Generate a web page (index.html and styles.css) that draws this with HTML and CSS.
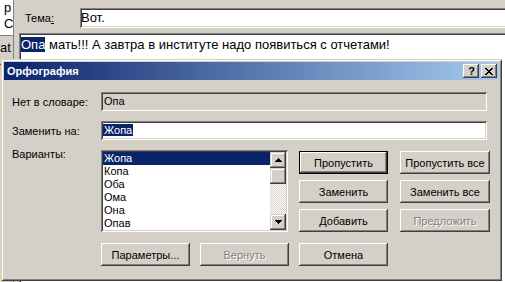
FILE: index.html
```html
<!DOCTYPE html>
<html lang="ru">
<head>
<meta charset="utf-8">
<title>Орфография</title>
<link rel="stylesheet" href="styles.css">
</head>
<body>
<div class="app">
  <div class="side">
    <div class="side-top"><div>р</div><div>С</div></div>
    <div class="side-bottom"><div class="side-line">at</div><div class="side-line">f</div><div class="side-rest"></div></div>
  </div>
  <div class="main">
    <div class="subject-row">
      <span class="subject-label">Тема<u>:</u></span>
      <div class="subject-input">Вот.</div>
    </div>
    <div class="body-text"><span class="hl">Опа</span> мать!!! А завтра в институте надо появиться с отчетами!</div>
  </div>
</div>

<div class="dialog">
  <div class="titlebar">
    <span class="title">Орфография</span>
    <div class="caption-btns">
      <span class="cap-btn help">?</span>
      <span class="cap-btn close"><svg width="8" height="7" viewBox="0 0 8 7" shape-rendering="crispEdges"><path d="M0 0h2v1H0zM6 0h2v1H6zM1 1h2v1H1zM5 1h2v1H5zM2 2h4v1H2zM3 3h2v1H3zM2 4h4v1H2zM1 5h2v1H1zM5 5h2v1H5zM0 6h2v1H0zM6 6h2v1H6z" fill="#000"/></svg></span>
    </div>
  </div>
  <div class="dlg-body">
    <div class="row">
      <span class="lbl">Нет в словаре:</span>
      <div class="field disabled">Опа</div>
    </div>
    <div class="row gap">
      <span class="lbl">Заменить на:</span>
      <div class="field"><span class="hl-sm">Жопа</span></div>
    </div>
    <div class="row gap top">
      <span class="lbl lbl-top">Варианты:</span>
      <div class="listbox">
        <ul class="items">
          <li class="sel">Жопа</li>
          <li>Копа</li>
          <li>Оба</li>
          <li>Ома</li>
          <li>Она</li>
          <li>Опав</li>
        </ul>
        <div class="scrollbar">
          <span class="sb-btn"><svg width="7" height="4" viewBox="0 0 7 4" shape-rendering="crispEdges"><path d="M3 0h1v1H3zM2 1h3v1H2zM1 2h5v1H1zM0 3h7v1H0z" fill="#000"/></svg></span>
          <span class="sb-thumb"></span>
          <span class="sb-track"></span>
          <span class="sb-btn"><svg width="7" height="4" viewBox="0 0 7 4" shape-rendering="crispEdges"><path d="M0 0h7v1H0zM1 1h5v1H1zM2 2h3v1H2zM3 3h1v1H3z" fill="#000"/></svg></span>
        </div>
      </div>
      <div class="btn-grid">
        <span class="btn default">Пропустить</span>
        <span class="btn">Пропустить все</span>
        <span class="btn">Заменить</span>
        <span class="btn">Заменить все</span>
        <span class="btn">Добавить</span>
        <span class="btn disabled-btn">Предложить</span>
      </div>
    </div>
    <div class="bottom-row">
      <span class="btn">Параметры...</span>
      <span class="btn disabled-btn">Вернуть</span>
      <span class="btn">Отмена</span>
    </div>
  </div>
</div>
</body>
</html>
```
FILE: styles.css
```css
* { box-sizing: border-box; }
html, body { margin: 0; padding: 0; }
body {
  width: 505px;
  height: 282px;
  overflow: hidden;
  position: relative;
  background: #D4D0C8;
  font-family: "Liberation Sans", Arial, sans-serif;
  font-size: 11px;
  color: #000;
}

/* background application */
.app { display: flex; height: 282px; }
.side {
  width: 14px;
  flex: none;
  display: flex;
  flex-direction: column;
  border-right: 1px solid #808080;
  overflow: hidden;
}
.side-top {
  height: 33px;
  background: #fff;
  font-size: 13px;
  line-height: 16px;
  padding: 0 0 0 4px;
  overflow: hidden;
}
.side-bottom {
  flex: 1;
  display: flex;
  flex-direction: column;
  border-top: 2px solid #fff;
  box-shadow: inset 0 1px #808080;
  font-size: 13px;
}
.side-line { height: 13px; line-height: 13px; padding-top: 6px; box-sizing: content-box; }
.side-rest { flex: 1; background: linear-gradient(to right, #E6D3A8 0 2px, #D4D0C8 2px); }

.main { flex: 1; display: flex; flex-direction: column; min-width: 0; }
.subject-row {
  height: 33px;
  display: flex;
  align-items: flex-start;
  padding-left: 11px;
}
.subject-label {
  width: 55px;
  flex: none;
  margin-top: 12px;
  font-size: 11px;
}
.subject-input {
  flex: 1;
  margin-top: 8px;
  margin-right: -4px;
  height: 20px;
  background: #fff;
  font-size: 13px;
  line-height: 16px;
  padding: 2px 1px;
  box-shadow: inset 1px 1px #808080, inset -1px -1px #fff, inset 2px 2px #404040, inset -2px -2px #D4D0C8;
}
.body-text {
  flex: 1;
  margin-left: 5px;
  margin-right: -4px;
  background: #fff;
  font-size: 13px;
  line-height: 16px;
  padding: 4px 2px;
  white-space: nowrap;
  box-shadow: inset 1px 1px #808080, inset 2px 2px #404040;
}
.hl { background: #0A246A; color: #fff; }

/* dialog */
.dialog {
  position: absolute;
  left: 1px;
  top: 59px;
  width: 501px;
  height: 222px;
  background: #D4D0C8;
  padding: 3px;
  box-shadow: inset 1px 1px #D4D0C8, inset -1px -1px #404040, inset 2px 2px #fff, inset -2px -2px #808080;
}
.titlebar {
  height: 18px;
  display: flex;
  align-items: center;
  justify-content: space-between;
  padding: 0 2px 0 3px;
  background: linear-gradient(to right, #0A246A, #A6CAF0);
}
.title { color: #fff; font-weight: bold; font-size: 11px; }
.caption-btns { display: flex; gap: 2px; }
.cap-btn {
  width: 16px;
  height: 14px;
  display: flex;
  align-items: center;
  justify-content: center;
  background: #D4D0C8;
  box-shadow: inset -1px -1px #404040, inset 1px 1px #fff, inset -2px -2px #808080;
}
.help { font-weight: bold; font-size: 11px; line-height: 14px; padding-left: 1px; }

.dlg-body { padding: 12px 0 0 8px; }
.row { display: flex; align-items: center; }
.row.gap { margin-top: 10px; }
.row.top { align-items: flex-start; }
.lbl { width: 89px; flex: none; }
.lbl-top { margin-top: -2px; }
.field {
  width: 386px;
  height: 19px;
  background: #fff;
  padding: 2px 3px;
  line-height: 15px;
  box-shadow: inset 1px 1px #808080, inset -1px -1px #fff, inset 2px 2px #404040, inset -2px -2px #D4D0C8;
}
.field.disabled { background: #D4D0C8; }
.hl-sm { background: #0A246A; color: #fff; margin-left: -1px; padding: 0 1px; }

.listbox {
  width: 187px;
  height: 82px;
  flex: none;
  display: flex;
  background: #fff;
  padding: 2px;
  box-shadow: inset 1px 1px #808080, inset -1px -1px #fff, inset 2px 2px #404040, inset -2px -2px #D4D0C8;
}
.items { flex: 1; list-style: none; margin: 0; padding: 0; }
.items li { height: 13px; line-height: 13px; padding-left: 1px; }
.items li.sel { background: #0A246A; color: #fff; }
.scrollbar { width: 16px; flex: none; display: flex; flex-direction: column; }
.sb-btn, .sb-thumb {
  height: 16px;
  flex: none;
  display: flex;
  align-items: center;
  justify-content: center;
  background: #D4D0C8;
  box-shadow: inset -1px -1px #404040, inset 1px 1px #D4D0C8, inset -2px -2px #808080, inset 2px 2px #fff;
}
.sb-track {
  flex: 1;
  background: repeating-conic-gradient(#fff 0 25%, #D4D0C8 0 50%) 0 0 / 2px 2px;
}

.btn-grid {
  margin-left: 11px;
  margin-top: 1px;
  display: grid;
  grid-template-columns: 89px 90px;
  grid-auto-rows: 23px;
  column-gap: 12px;
  row-gap: 6px;
}
.btn {
  display: flex;
  align-items: center;
  justify-content: center;
  height: 23px;
  background: #D4D0C8;
  white-space: nowrap;
  box-shadow: inset -1px -1px #404040, inset 1px 1px #fff, inset -2px -2px #808080;
}
.btn.default {
  box-shadow: inset 0 0 0 1px #000, inset -2px -2px #404040, inset 2px 2px #fff, inset -3px -3px #808080;
}
.disabled-btn { color: #808080; text-shadow: 1px 1px 0 #fff; }

.bottom-row {
  display: flex;
  gap: 10px;
  margin-top: 11px;
  padding-left: 89px;
}
.bottom-row .btn { width: 89px; }
```
